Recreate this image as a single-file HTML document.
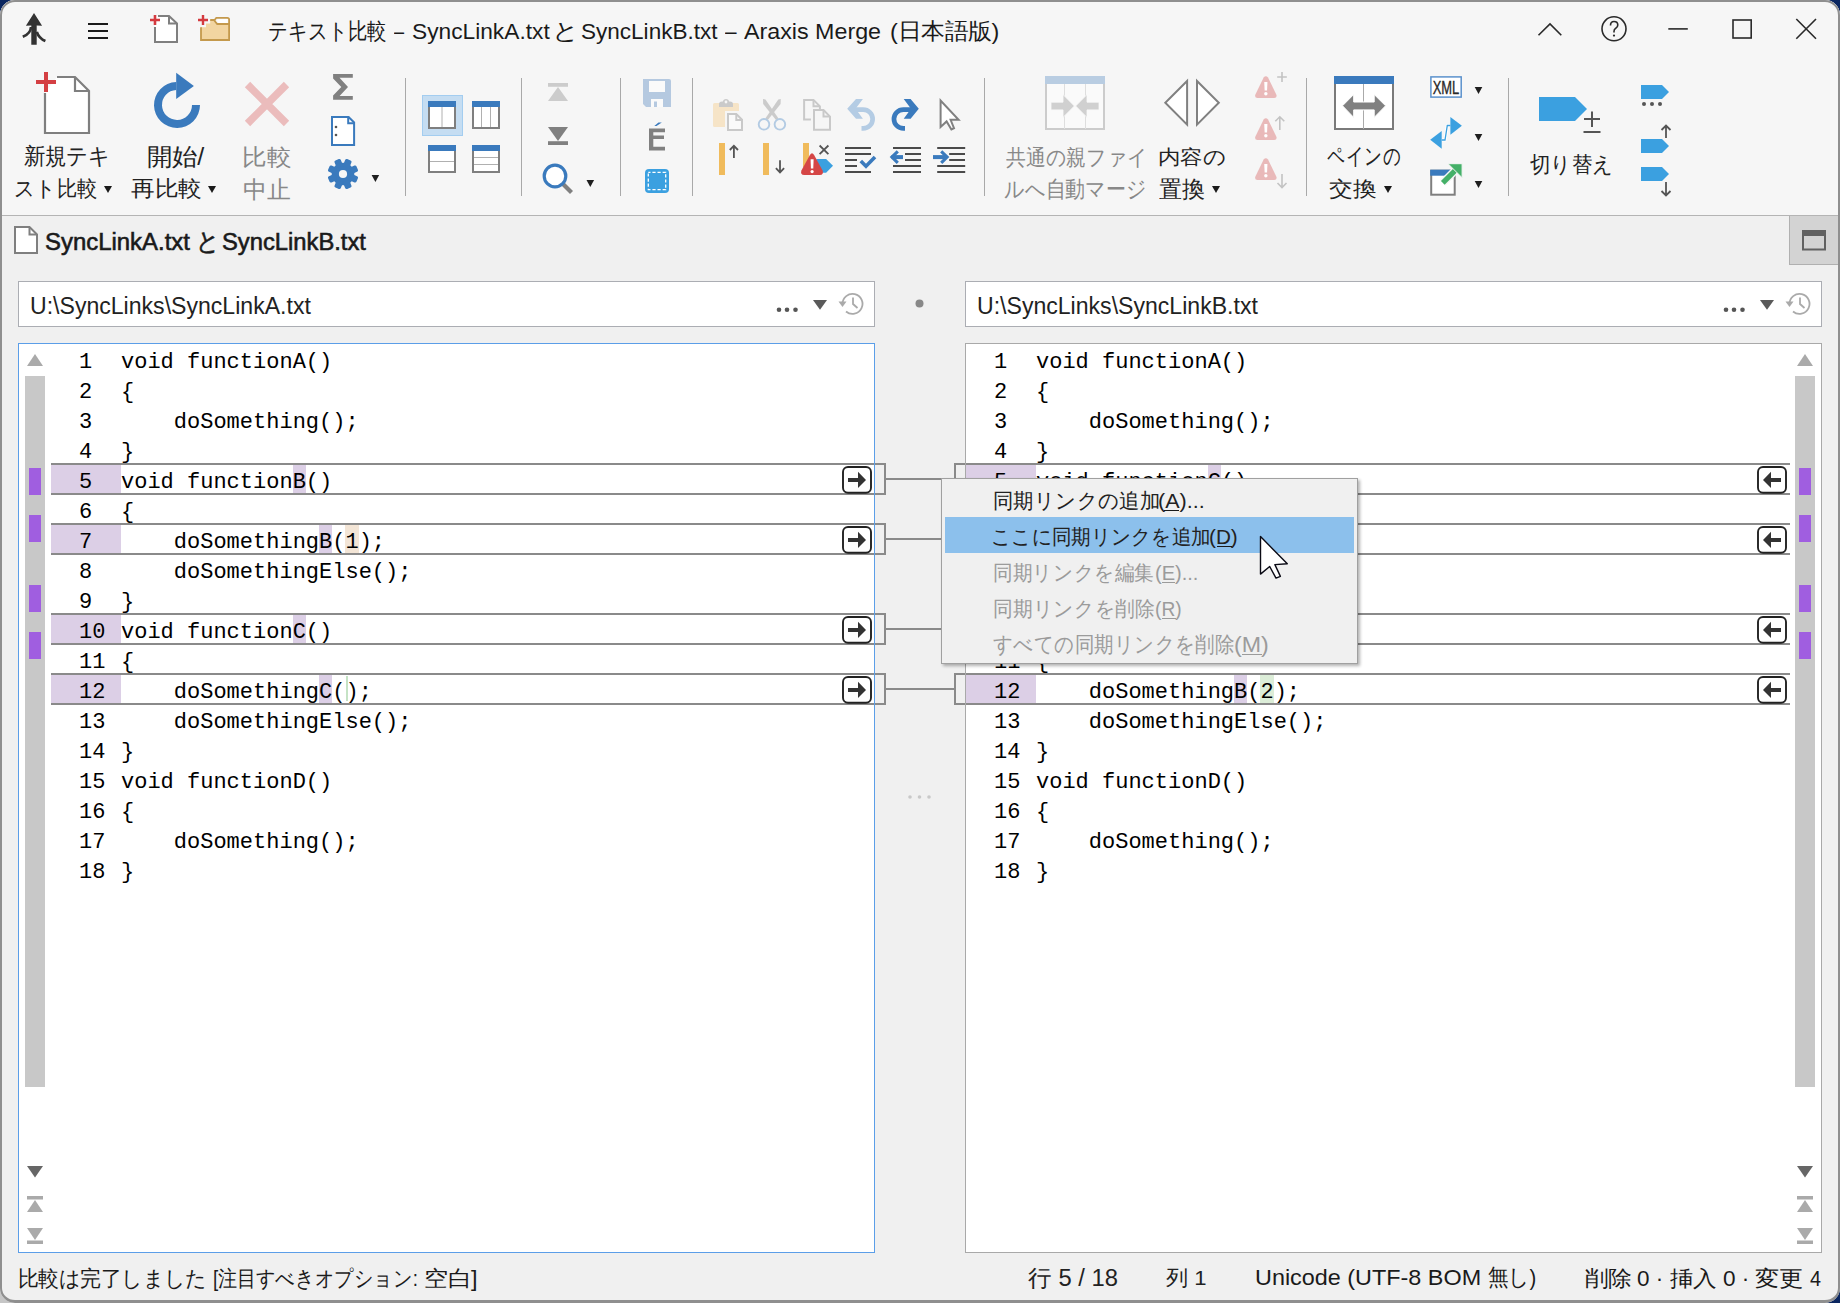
<!DOCTYPE html>
<html><head><meta charset="utf-8"><style>*{margin:0;padding:0;box-sizing:border-box}
html,body{width:1840px;height:1303px;overflow:hidden;background:#0a2660;font-family:"Liberation Sans",sans-serif}
.a{position:absolute}
svg.i{position:absolute;overflow:visible}
#win{position:absolute;left:0;top:0;width:1840px;height:1303px;border-radius:15px;background:#f0f0f0;overflow:hidden}
#frame{position:absolute;left:0;top:0;width:1840px;height:1303px;border:2px solid #8f8f8f;border-bottom-width:3px;border-radius:15px;pointer-events:none;z-index:50}
.t{position:absolute;white-space:nowrap;font-size:22px;line-height:26px;transform-origin:0 0}
.sep{position:absolute;width:1px;top:78px;height:118px;background:#a9a9a9}
.code{position:absolute;font-family:"Liberation Mono",monospace;font-size:22px;line-height:30px;white-space:pre;color:#000}
.pathbox{position:absolute;top:281px;width:857px;height:46px;background:#fff;border:1px solid #abadb3}
.pane{position:absolute;top:343px;width:857px;height:910px;background:#fff;border:1px solid #a9a9a9}
.lbox{position:absolute;height:32px;border:2px solid #8a8a8a}
.conn{position:absolute;height:2px;background:#8a8a8a;width:68px;left:886px}
.abtn{position:absolute;width:30px;height:28px;border:2px solid #333;border-radius:6px;background:#fff}
.mark{position:absolute;width:12px;height:27px;background:#a05ee0}
.tri{position:absolute;width:0;height:0;border-left:4px solid transparent;border-right:4px solid transparent;border-top:7px solid #1a1a1a}
</style></head>
<body>
<div class="a" id="corner-bl" style="left:0;top:1270px;width:40px;height:33px;background:#c6c6c6"></div>
<div id="win">
<div class="a" style="left:0;top:0;width:1840px;height:215px;background:#f6f6f6"></div>
<div class="a" style="left:0;top:215px;width:1840px;height:1px;background:#b4b4b4"></div>
<div class="t" style="left:268.43px;top:18.24px;color:#1a1a1a;transform:scale(0.8709,1.0304)">テキスト比較</div><div class="t" style="left:393.9px;top:18.24px;color:#1a1a1a;transform:scale(0.8231,1.0304)">–</div><div class="t" style="left:411.87px;top:18.24px;color:#1a1a1a;transform:scale(1.0333,1.0304)">SyncLinkA.txt</div><div class="t" style="left:551.73px;top:18.24px;color:#1a1a1a;transform:scale(1.1923,1.0304)">と</div><div class="t" style="left:581.28px;top:18.24px;color:#1a1a1a;transform:scale(1.0242,1.0304)">SyncLinkB.txt</div><div class="t" style="left:724.7px;top:18.24px;color:#1a1a1a;transform:scale(0.9462,1.0304)">–</div><div class="t" style="left:744.3px;top:18.24px;color:#1a1a1a;transform:scale(1.0574,1.0304)">Araxis Merge</div><div class="t" style="left:889.94px;top:18.24px;color:#1a1a1a;transform:scale(1.0644,1.0304)">(日本語版)</div>

<div class="sep" style="left:405px"></div>
<div class="sep" style="left:521px"></div>
<div class="sep" style="left:620px"></div>
<div class="sep" style="left:692px"></div>
<div class="sep" style="left:984px"></div>
<div class="sep" style="left:1306px"></div>
<div class="sep" style="left:1508px"></div>

<div class="t" style="left:24.05px;top:143.95px;color:#222222;transform:scale(0.9535,1.0238)">新規テキ</div><div class="t" style="left:13.75px;top:176.0px;color:#222222;transform:scale(0.9241,1.0)">スト比較</div><div class="t" style="left:146.86px;top:143.28px;color:#222222;transform:scale(1.1429,1.075)">開始/</div><div class="t" style="left:130.6px;top:176.0px;color:#222222;transform:scale(1.0769,1.0)">再比較</div><div class="t" style="left:241.76px;top:143.9px;color:#888888;transform:scale(1.122,1.0476)">比較</div><div class="t" style="left:242.9px;top:175.8px;color:#888888;transform:scale(1.0952,1.1)">中止</div>
<div class="t" style="left:1005.6px;top:144.71px;color:#888888;transform:scale(0.898,0.9952)">共通の親ファイ</div><div class="t" style="left:1004.1px;top:175.92px;color:#888888;transform:scale(0.9026,1.0381)">ルへ自動マージ</div><div class="t" style="left:1157.56px;top:146.09px;color:#222222;transform:scale(1.0222,0.9091)">内容の</div><div class="t" style="left:1159.0px;top:175.9px;color:#222222;transform:scale(1.0465,1.0476)">置換</div><div class="t" style="left:1326.89px;top:142.79px;color:#222222;transform:scale(0.8079,1.0526)">ペインの</div><div class="t" style="left:1329.42px;top:177.04px;color:#222222;transform:scale(1.0833,0.9565)">交換</div><div class="t" style="left:1530.0px;top:152.0px;color:#222222;transform:scale(0.931,1.0)">切り替え</div>
<div class="tri" style="left:103.5px;top:186px"></div>
<div class="tri" style="left:207.5px;top:186px"></div>
<div class="tri" style="left:1211.5px;top:186px"></div>
<div class="tri" style="left:1383.5px;top:186px"></div>

<div class="t" style="left:45.41px;top:228.02px;color:#1a1a1a;-webkit-text-stroke:0.55px #1a1a1a;transform:scale(1.0872,1.119)">SyncLinkA.txt</div><div class="t" style="left:196.3px;top:228.02px;color:#1a1a1a;-webkit-text-stroke:0.55px #1a1a1a;transform:scale(1.0333,1.119)">と</div><div class="t" style="left:222.02px;top:228.02px;color:#1a1a1a;-webkit-text-stroke:0.55px #1a1a1a;transform:scale(1.0797,1.119)">SyncLinkB.txt</div>
<div class="a" style="left:1789px;top:216px;width:49px;height:49px;background:#d3d3d3;border-left:1px solid #b0b0b0;border-bottom:1px solid #b0b0b0"></div>

<div class="pathbox" style="left:18px"></div>
<div class="t" style="left:29.9px;top:292.12px;color:#222222;transform:scale(1.0489,1.0952)">U:\SyncLinks\SyncLinkA.txt</div>
<div class="pathbox" style="left:965px"></div>
<div class="t" style="left:976.9px;top:292.12px;color:#222222;transform:scale(1.0489,1.0952)">U:\SyncLinks\SyncLinkB.txt</div>

<div class="pane" style="left:18px;border-color:#5b9ee8"></div>
<div class="pane" style="left:965px"></div>
<!-- overview bars -->
<div class="a" style="left:25px;top:376px;width:20px;height:711px;background:#c8c8c8"></div>
<div class="a" style="left:1795px;top:376px;width:20px;height:711px;background:#c8c8c8"></div>
<div class="mark" style="left:29px;top:468px"></div>
<div class="mark" style="left:29px;top:515px"></div>
<div class="mark" style="left:29px;top:585px"></div>
<div class="mark" style="left:29px;top:632px"></div>
<div class="mark" style="left:1799px;top:468px"></div>
<div class="mark" style="left:1799px;top:515px"></div>
<div class="mark" style="left:1799px;top:585px"></div>
<div class="mark" style="left:1799px;top:632px"></div>

<div class="a" style="left:51px;top:465px;width:70px;height:30px;background:#dccfe6"></div>
<div class="a" style="left:51px;top:525px;width:70px;height:30px;background:#dccfe6"></div>
<div class="a" style="left:51px;top:615px;width:70px;height:30px;background:#dccfe6"></div>
<div class="a" style="left:51px;top:675px;width:70px;height:30px;background:#dccfe6"></div>
<div class="a" style="left:292.6px;top:465px;width:13.2px;height:30px;background:#dccfe6"></div>
<div class="a" style="left:319.0px;top:525px;width:13.2px;height:30px;background:#dccfe6"></div>
<div class="a" style="left:345.4px;top:525px;width:13.2px;height:30px;background:#f3e5d6"></div>
<div class="a" style="left:292.6px;top:615px;width:13.2px;height:30px;background:#dccfe6"></div>
<div class="a" style="left:319.0px;top:675px;width:13.2px;height:30px;background:#dccfe6"></div>
<div class="code" style="left:79px;top:347.5px">1</div>
<div class="code" style="left:121px;top:347.5px">void functionA()</div>
<div class="code" style="left:79px;top:377.5px">2</div>
<div class="code" style="left:121px;top:377.5px">{</div>
<div class="code" style="left:79px;top:407.5px">3</div>
<div class="code" style="left:121px;top:407.5px">    doSomething();</div>
<div class="code" style="left:79px;top:437.5px">4</div>
<div class="code" style="left:121px;top:437.5px">}</div>
<div class="code" style="left:79px;top:467.5px">5</div>
<div class="code" style="left:121px;top:467.5px">void functionB()</div>
<div class="code" style="left:79px;top:497.5px">6</div>
<div class="code" style="left:121px;top:497.5px">{</div>
<div class="code" style="left:79px;top:527.5px">7</div>
<div class="code" style="left:121px;top:527.5px">    doSomethingB(1);</div>
<div class="code" style="left:79px;top:557.5px">8</div>
<div class="code" style="left:121px;top:557.5px">    doSomethingElse();</div>
<div class="code" style="left:79px;top:587.5px">9</div>
<div class="code" style="left:121px;top:587.5px">}</div>
<div class="code" style="left:79px;top:617.5px">10</div>
<div class="code" style="left:121px;top:617.5px">void functionC()</div>
<div class="code" style="left:79px;top:647.5px">11</div>
<div class="code" style="left:121px;top:647.5px">{</div>
<div class="code" style="left:79px;top:677.5px">12</div>
<div class="code" style="left:121px;top:677.5px">    doSomethingC();</div>
<div class="code" style="left:79px;top:707.5px">13</div>
<div class="code" style="left:121px;top:707.5px">    doSomethingElse();</div>
<div class="code" style="left:79px;top:737.5px">14</div>
<div class="code" style="left:121px;top:737.5px">}</div>
<div class="code" style="left:79px;top:767.5px">15</div>
<div class="code" style="left:121px;top:767.5px">void functionD()</div>
<div class="code" style="left:79px;top:797.5px">16</div>
<div class="code" style="left:121px;top:797.5px">{</div>
<div class="code" style="left:79px;top:827.5px">17</div>
<div class="code" style="left:121px;top:827.5px">    doSomething();</div>
<div class="code" style="left:79px;top:857.5px">18</div>
<div class="code" style="left:121px;top:857.5px">}</div>
<div class="a" style="left:966px;top:465px;width:70px;height:30px;background:#dccfe6"></div>
<div class="a" style="left:966px;top:525px;width:70px;height:30px;background:#dccfe6"></div>
<div class="a" style="left:966px;top:615px;width:70px;height:30px;background:#dccfe6"></div>
<div class="a" style="left:966px;top:675px;width:70px;height:30px;background:#dccfe6"></div>
<div class="a" style="left:1207.6px;top:465px;width:13.2px;height:30px;background:#dccfe6"></div>
<div class="a" style="left:1234.0px;top:525px;width:13.2px;height:30px;background:#dccfe6"></div>
<div class="a" style="left:1207.6px;top:615px;width:13.2px;height:30px;background:#dccfe6"></div>
<div class="a" style="left:1234.0px;top:675px;width:13.2px;height:30px;background:#dccfe6"></div>
<div class="a" style="left:1260.4px;top:675px;width:13.2px;height:30px;background:#dcedd8"></div>
<div class="code" style="left:994px;top:347.5px">1</div>
<div class="code" style="left:1036px;top:347.5px">void functionA()</div>
<div class="code" style="left:994px;top:377.5px">2</div>
<div class="code" style="left:1036px;top:377.5px">{</div>
<div class="code" style="left:994px;top:407.5px">3</div>
<div class="code" style="left:1036px;top:407.5px">    doSomething();</div>
<div class="code" style="left:994px;top:437.5px">4</div>
<div class="code" style="left:1036px;top:437.5px">}</div>
<div class="code" style="left:994px;top:467.5px">5</div>
<div class="code" style="left:1036px;top:467.5px">void functionC()</div>
<div class="code" style="left:994px;top:497.5px">6</div>
<div class="code" style="left:1036px;top:497.5px">{</div>
<div class="code" style="left:994px;top:527.5px">7</div>
<div class="code" style="left:1036px;top:527.5px">    doSomethingC();</div>
<div class="code" style="left:994px;top:557.5px">8</div>
<div class="code" style="left:1036px;top:557.5px">    doSomethingElse();</div>
<div class="code" style="left:994px;top:587.5px">9</div>
<div class="code" style="left:1036px;top:587.5px">}</div>
<div class="code" style="left:994px;top:617.5px">10</div>
<div class="code" style="left:1036px;top:617.5px">void functionB()</div>
<div class="code" style="left:994px;top:647.5px">11</div>
<div class="code" style="left:1036px;top:647.5px">{</div>
<div class="code" style="left:994px;top:677.5px">12</div>
<div class="code" style="left:1036px;top:677.5px">    doSomethingB(2);</div>
<div class="code" style="left:994px;top:707.5px">13</div>
<div class="code" style="left:1036px;top:707.5px">    doSomethingElse();</div>
<div class="code" style="left:994px;top:737.5px">14</div>
<div class="code" style="left:1036px;top:737.5px">}</div>
<div class="code" style="left:994px;top:767.5px">15</div>
<div class="code" style="left:1036px;top:767.5px">void functionD()</div>
<div class="code" style="left:994px;top:797.5px">16</div>
<div class="code" style="left:1036px;top:797.5px">{</div>
<div class="code" style="left:994px;top:827.5px">17</div>
<div class="code" style="left:1036px;top:827.5px">    doSomething();</div>
<div class="code" style="left:994px;top:857.5px">18</div>
<div class="code" style="left:1036px;top:857.5px">}</div>

<!-- link boxes -->
<div class="lbox" style="border-left:0;left:51px;top:463px;width:835px"></div>
<div class="lbox" style="border-left:0;left:51px;top:523px;width:835px"></div>
<div class="lbox" style="border-left:0;left:51px;top:613px;width:835px"></div>
<div class="lbox" style="border-left:0;left:51px;top:673px;width:835px"></div>
<div class="lbox" style="border-right:0;left:954px;top:463px;width:836px"></div>
<div class="lbox" style="border-right:0;left:954px;top:523px;width:836px"></div>
<div class="lbox" style="border-right:0;left:954px;top:613px;width:836px"></div>
<div class="lbox" style="border-right:0;left:954px;top:673px;width:836px"></div>
<div class="conn" style="top:478px"></div>
<div class="conn" style="top:538px"></div>
<div class="conn" style="top:628px"></div>
<div class="conn" style="top:688px"></div>
<!-- re-draw pane borders over link boxes -->
<div class="a" style="left:874px;top:343px;width:1px;height:910px;background:#5b9ee8"></div>
<div class="a" style="left:965px;top:343px;width:1px;height:910px;background:#a9a9a9"></div>

<!-- araxis logo -->
<svg class="i" style="left:0;top:0" width="60" height="60" viewBox="0 0 60 60">
 <path d="M34 13 L25.9 25.8 L31.3 25.4 V44.7 H36.7 V25.4 L42.1 25.8 Z" fill="#333"/>
 <path d="M31 27 Q30.8 33.5 22.8 36.8" fill="none" stroke="#333" stroke-width="2.7"/>
 <path d="M36.8 31.8 Q38.8 38.2 45.4 41" fill="none" stroke="#333" stroke-width="2.7"/>
</svg>
<!-- hamburger -->
<div class="a" style="left:88px;top:23px;width:20px;height:2px;background:#1a1a1a"></div>
<div class="a" style="left:88px;top:30px;width:20px;height:2px;background:#1a1a1a"></div>
<div class="a" style="left:88px;top:37px;width:20px;height:2px;background:#1a1a1a"></div>
<!-- new doc small -->
<svg class="i" style="left:0;top:0" width="240" height="50" viewBox="0 0 240 50">
 <path d="M155 27 V42 H177 V23.5 L169 16 H158" fill="#fff" stroke="#7f7f7f" stroke-width="2"/>
 <path d="M155 16 H158 V27 H155 Z" fill="#fff"/>
 <path d="M169 16 V23.5 H177" fill="none" stroke="#7f7f7f" stroke-width="2"/>
 <path d="M150 20 H160 M155 15 V25" stroke="#d43a3f" stroke-width="2.6"/>
 <!-- folder -->
 <path d="M201 27.2 H206 V23.6 H210.2 V20 H214 L217.1 24 H229.1 V40 H201 Z" fill="#f2d5a1"/>
 <path d="M201 27.2 V40 H229.1 V19.6 Q229.1 17.8 227.3 17.8 H216.3 L214.6 20 H210.2" fill="none" stroke="#c4994c" stroke-width="1.8"/>
 <path d="M213.9 20 L217.2 24 H229" fill="none" stroke="#c4994c" stroke-width="1.8"/>
 <path d="M217.9 19.3 H227.7 V23 H218.6 L216.9 20.6 Z" fill="#fff"/>
 <path d="M198 20 H208 M203 15 V25" stroke="#d43a3f" stroke-width="2.4"/>
</svg>
<!-- window controls -->
<svg class="i" style="left:1520px;top:0" width="320" height="58" viewBox="1520 0 320 58">
 <path d="M1538.5 35.3 L1550 23.9 L1561.3 35.3" fill="none" stroke="#2a2a2a" stroke-width="1.6"/>
 <circle cx="1614" cy="28.8" r="12" fill="none" stroke="#2a2a2a" stroke-width="1.6"/>
 <path d="M1610.5 25.5 Q1610.5 21.5 1614 21.5 Q1617.8 21.5 1617.8 25 Q1617.8 27.3 1615.5 28.5 Q1614 29.3 1614 31.5 V32.5" fill="none" stroke="#2a2a2a" stroke-width="1.6"/>
 <circle cx="1614" cy="35.6" r="1.1" fill="#2a2a2a"/>
 <path d="M1668.3 28.9 H1687.8" stroke="#2a2a2a" stroke-width="1.6"/>
 <rect x="1733" y="20" width="18.2" height="18" fill="none" stroke="#2a2a2a" stroke-width="1.6"/>
 <path d="M1796.3 19 L1816 38.8 M1816 19 L1796.3 38.8" stroke="#2a2a2a" stroke-width="1.6"/>
</svg>
<!-- tab doc icon -->
<svg class="i" style="left:0;top:200px" width="60" height="70" viewBox="0 200 60 70">
 <path d="M15 227 H29.5 L37 234.5 V253 H15 Z" fill="#fff" stroke="#7f7f7f" stroke-width="2"/>
 <path d="M29.5 227 V234.5 H37" fill="none" stroke="#7f7f7f" stroke-width="2"/>
</svg>
<!-- tab right window icon -->
<svg class="i" style="left:1790px;top:216px" width="50" height="50" viewBox="1790 216 50 50">
 <rect x="1803" y="231" width="22" height="18.5" fill="none" stroke="#616161" stroke-width="2"/>
 <rect x="1802" y="230" width="24" height="6" fill="#616161"/>
</svg>
<!-- path box icons -->
<svg class="i" style="left:0;top:280px" width="1840" height="50" viewBox="0 280 1840 50">
 <g id="pb" fill="#555">
  <circle cx="779" cy="309.7" r="2.3"/><circle cx="787" cy="309.7" r="2.3"/><circle cx="795.5" cy="309.7" r="2.3"/>
  <path d="M813 300 H827 L820 309.8 Z" fill="#5a5a5a"/>
 </g>
 <g fill="#555">
  <circle cx="1726" cy="309.7" r="2.3"/><circle cx="1734" cy="309.7" r="2.3"/><circle cx="1742.5" cy="309.7" r="2.3"/>
  <path d="M1760 300 H1774 L1767 309.8 Z" fill="#5a5a5a"/>
 </g>
 <g fill="none" stroke="#aaaaaa" stroke-width="1.8">
  <path d="M842.5 304 A10 10 0 1 1 846 311.5"/>
  <path d="M853 297.5 V304 L857.5 308"/>
  <path d="M1789.5 304 A10 10 0 1 1 1793 311.5"/>
  <path d="M1800 297.5 V304 L1804.5 308"/>
 </g>
 <path d="M838.5 301.5 H846.5 L842.5 307 Z" fill="#aaaaaa"/>
 <path d="M1785.5 301.5 H1793.5 L1789.5 307 Z" fill="#aaaaaa"/>
 <circle cx="919.5" cy="303.5" r="4" fill="#888"/>
</svg>
<!-- pane scroll icons -->
<svg class="i" style="left:0;top:340px" width="1840" height="920" viewBox="0 340 1840 920">
 <path d="M27 366 L35 354 L43 366 Z" fill="#aaaaaa"/>
 <path d="M1797 366 L1805 354 L1813 366 Z" fill="#aaaaaa"/>
 <path d="M27 1166 H43 L35 1177.5 Z" fill="#666"/>
 <path d="M1797 1166 H1813 L1805 1177.5 Z" fill="#666"/>
 <g fill="#aaaaaa">
  <rect x="27" y="1196" width="16" height="3.5"/><path d="M27 1212 L35 1200 L43 1212 Z"/>
  <path d="M27 1228 H43 L35 1240 Z"/><rect x="27" y="1240.5" width="16" height="3.5"/>
  <rect x="1797" y="1196" width="16" height="3.5"/><path d="M1797 1212 L1805 1200 L1813 1212 Z"/>
  <path d="M1797 1228 H1813 L1805 1240 Z"/><rect x="1797" y="1240.5" width="16" height="3.5"/>
 </g>
 <g fill="#c8c8c8"><circle cx="910" cy="797" r="1.8"/><circle cx="919.5" cy="797" r="1.8"/><circle cx="929" cy="797" r="1.8"/></g>
</svg>
<!-- arrow buttons -->
<svg class="i" style="left:0;top:450px" width="1840" height="260" viewBox="0 450 1840 260">
 <defs>
  <g id="rb"><rect x="843" y="467" width="28" height="25.8" rx="5" fill="#fff" stroke="#222" stroke-width="1.9"/>
   <path d="M848 478 H858 V471.8 L866 480 L858 488 V482 H848 Z" fill="#333"/></g>
  <g id="lb"><rect x="1758" y="467" width="28" height="25.8" rx="5" fill="#fff" stroke="#222" stroke-width="1.9"/>
   <path d="M1781 478 H1771 V471.8 L1763 480 L1771 488 V482 H1781 Z" fill="#333"/></g>
 </defs>
 <use href="#rb"/><use href="#rb" y="60"/><use href="#rb" y="150"/><use href="#rb" y="210"/>
 <use href="#lb"/><use href="#lb" y="60"/><use href="#lb" y="150"/><use href="#lb" y="210"/>
</svg>
<!-- green insertion cursor left line 12 -->
<div class="a" style="left:345.5px;top:676px;width:2px;height:25px;background:#c5e3c5"></div>
<svg class="i" style="left:0;top:58px" width="1840" height="157" viewBox="0 58 1840 157">
<path d="M45 93 V133 H89 V91 L75 77 H57" fill="#fff" stroke="#7f7f7f" stroke-width="2.2"/>
<path d="M75 77 V91 H89" fill="none" stroke="#7f7f7f" stroke-width="2.2"/>
<path d="M36 82 H56 M46 72 V92" stroke="#d43f43" stroke-width="4"/>
<path d="M200 105 A23 23 0 1 1 176.2 82 V90 A15 15 0 1 0 192 105 Z" fill="#3a7abd"/>
<path d="M176.2 72.8 L193.9 86 L176.2 98.9 Z" fill="#3a7abd"/>
<path d="M247.5 84.5 L286.5 123.5 M286.5 84.5 L247.5 123.5" stroke="#ebbcbc" stroke-width="7.6"/>
<path d="M333.1 74.1 H352.8 V77.8 H339.5 L348 87 L339.6 96 H352.8 V99.8 H333.1 V95.4 L341.3 87 L333.1 78.5 Z" fill="#808080"/>
<path d="M332 117 H348.6 L354.1 122.5 V145 H332 Z" fill="#fff" stroke="#3a7abd" stroke-width="2"/>
<path d="M348.2 117 V123.2 H354.1" fill="none" stroke="#3a7abd" stroke-width="2"/>
<circle cx="336" cy="127" r="1.3" fill="#555"/><circle cx="336" cy="135" r="1.3" fill="#555"/>
<g fill="#3a7abd"><circle cx="343" cy="174" r="11.3"/><rect x="339.6" y="158.6" width="6.8" height="8" rx="1.6" transform="rotate(22.5 343 174)"/><rect x="339.6" y="158.6" width="6.8" height="8" rx="1.6" transform="rotate(67.5 343 174)"/><rect x="339.6" y="158.6" width="6.8" height="8" rx="1.6" transform="rotate(112.5 343 174)"/><rect x="339.6" y="158.6" width="6.8" height="8" rx="1.6" transform="rotate(157.5 343 174)"/><rect x="339.6" y="158.6" width="6.8" height="8" rx="1.6" transform="rotate(202.5 343 174)"/><rect x="339.6" y="158.6" width="6.8" height="8" rx="1.6" transform="rotate(247.5 343 174)"/><rect x="339.6" y="158.6" width="6.8" height="8" rx="1.6" transform="rotate(292.5 343 174)"/><rect x="339.6" y="158.6" width="6.8" height="8" rx="1.6" transform="rotate(337.5 343 174)"/></g><circle cx="343" cy="174" r="4.1" fill="#f6f6f6"/>
<path d="M371.6 175 H379.20000000000005 L375.40000000000003 182 Z" fill="#1f1f1f"/>
<rect x="422.5" y="95.5" width="40" height="40" fill="#c5ddf2" stroke="#a3cdf0" stroke-width="1"/>
<rect x="429" y="102" width="26" height="26" fill="#fff" stroke="#7f7f7f" stroke-width="2"/><rect x="428" y="101" width="28" height="6" fill="#3a7abd"/><path d="M442 107 V127" stroke="#b0b0b0" stroke-width="1"/>
<rect x="473" y="102" width="26" height="26" fill="#fff" stroke="#7f7f7f" stroke-width="2"/><rect x="472" y="101" width="28" height="6" fill="#3a7abd"/><path d="M481.5 107 V127 M490.5 107 V127" stroke="#b0b0b0" stroke-width="1"/>
<rect x="429" y="146" width="26" height="26" fill="#fff" stroke="#7f7f7f" stroke-width="2"/><rect x="428" y="145" width="28" height="6" fill="#3a7abd"/><path d="M430 161.5 H454" stroke="#b0b0b0" stroke-width="1"/>
<rect x="473" y="146" width="26" height="26" fill="#fff" stroke="#7f7f7f" stroke-width="2"/><rect x="472" y="145" width="28" height="6" fill="#3a7abd"/><path d="M474 157.5 H498 M474 164.5 H498" stroke="#b0b0b0" stroke-width="1"/>
<rect x="548" y="83" width="20" height="3.8" fill="#cccccc"/><path d="M548 101 L558 87 L568 101 Z" fill="#cccccc"/>
<path d="M548 127 H568 L558 141 Z" fill="#808080"/><rect x="548" y="141.2" width="20" height="3.8" fill="#808080"/>
<path d="M562.5 183.5 L571.5 192.5" stroke="#808080" stroke-width="4.2"/>
<circle cx="555" cy="176" r="10.8" fill="#fff" stroke="#3a7abd" stroke-width="3.2"/>
<path d="M586.5 180 H594.1 L590.3 187 Z" fill="#1f1f1f"/>
<path d="M643 79 H669 Q671 79 671 81 V107 H646 L643 104 Z" fill="#b5c9e0"/>
<rect x="649" y="81" width="16" height="11" fill="#fafafa"/>
<rect x="651" y="99" width="12" height="8" fill="#fafafa"/><rect x="654" y="101.5" width="3" height="5.5" fill="#b5c9e0"/>
<path d="M649 128.5 H665 V132.3 H653.3 V135.4 H664 V139 H653.3 V146.8 H665 V150.6 H649 Z" fill="#808080"/>
<path d="M654.3 126 L658.5 122.6 H661.8 L656.5 126 Z" fill="#3a7abd"/>
<rect x="645" y="169" width="24" height="24" rx="4" fill="#3ba0e0"/>
<rect x="648.3" y="172.3" width="17.4" height="17.4" fill="none" stroke="#fff" stroke-width="1.3" stroke-dasharray="3.2 1.9" stroke-dashoffset="1"/>
<path d="M714.5 103 H737.5 Q739 103 739 104.5 V111 H725 V127 H714.5 Q713 127 713 125.5 V104.5 Q713 103 714.5 103 Z" fill="#f6e4c7"/>
<path d="M719 104 Q719 101.5 722 101.5 H723 Q723.2 99 726 99 Q728.8 99 729 101.5 H730 Q733 101.5 733 104 V107 H719 Z" fill="#cacaca"/><circle cx="726" cy="102" r="1.4" fill="#f6f6f6"/>
<path d="M728 114 H736.3 L742 119.7 V130 H728 Z" fill="#fafafa" stroke="#c9c9c9" stroke-width="2"/><path d="M736.3 114 V120 H742" fill="none" stroke="#c9c9c9" stroke-width="2"/>
<path d="M763 99 L765.5 99.5 L778.5 118.5 L776 120 L763.2 104 Z" fill="#cbcbcb"/>
<path d="M780.8 99 L778.3 99.5 L765.3 118.5 L767.8 120 L780.6 104 Z" fill="#cbcbcb"/>
<circle cx="764" cy="124.3" r="5.3" fill="#f6f6f6" stroke="#b3cbe3" stroke-width="1.9"/><circle cx="779.9" cy="124.3" r="5.3" fill="#f6f6f6" stroke="#b3cbe3" stroke-width="1.9"/>
<path d="M810.9 119.6 H804.1 V99.9 H813.5 L819.9 106.3 V110" fill="none" stroke="#c9c9c9" stroke-width="2"/><path d="M813.5 99.9 V106.3 H819.9" fill="none" stroke="#c9c9c9" stroke-width="2"/>
<path d="M814 110.1 H823.5 L830 116.6 V129.8 H814 Z" fill="#f6f6f6" stroke="#c9c9c9" stroke-width="2"/><path d="M823.5 110.1 V116.6 H830" fill="none" stroke="#c9c9c9" stroke-width="2"/>
<path d="M856 98.9 H862.9 L855.6 108.8 L862.9 118.8 H856 L847.2 108.8 Z" fill="#b4cce4"/>
<path d="M852 109.55 H863.2 A9.45 9.45 0 0 1 863.2 128.45 H861.5" fill="none" stroke="#b4cce4" stroke-width="4.7"/>
<path d="M910.6 98.9 H903.7 L911 108.8 L903.7 118.8 H910.6 L918.8 108.8 Z" fill="#3a7abd"/>
<path d="M914.6 109.55 H903.4 A9.45 9.45 0 0 0 903.4 128.45 H905" fill="none" stroke="#3a7abd" stroke-width="4.7"/>
<path d="M940.6 100.5 V127 L946.6 121.4 L951.4 129.4 L954 128.2 L950.6 119.8 H958.6 Z" fill="#fff" stroke="#808080" stroke-width="2" stroke-linejoin="miter"/>
<rect x="719" y="143" width="6" height="32" fill="#f0bb5c"/>
<path d="M733.9 158 V146.5 M729.8 150 L733.9 145.8 L738 150" fill="none" stroke="#555" stroke-width="1.8"/>
<rect x="763" y="143" width="6" height="32" fill="#f0bb5c"/>
<path d="M780 160.3 V172 M775.9 168.2 L780 172.4 L784.1 168.2" fill="none" stroke="#555" stroke-width="1.8"/>
<rect x="803" y="143" width="6" height="24" fill="#f0bb5c"/>
<path d="M816.3 158.9 H826.1 L833 165.8 L826.1 172.8 H816.3 Z" fill="#3ba0e0"/>
<path d="M819.6 145.5 L828.4 154.2 M828.4 145.5 L819.6 154.2" stroke="#555" stroke-width="1.8"/>
<path d="M809.9 155 Q812 151.4 814.1 155 L822.6 170.6 Q824 175 819.8 175 H804.2 Q800 175 801.4 170.6 Z" fill="#d54646" stroke="#f6f6f6" stroke-width="0"/>
<path d="M810.6 159.2 H813.6 L813.3 168.6 H810.9 Z" fill="#fff"/><circle cx="812.1" cy="171.6" r="1.6" fill="#fff"/>
<rect x="845" y="147" width="26" height="2" fill="#4a4a4a"/><rect x="845" y="153" width="26" height="2" fill="#4a4a4a"/><rect x="845" y="159" width="12" height="2" fill="#4a4a4a"/><rect x="845" y="165" width="12" height="2" fill="#4a4a4a"/><rect x="845" y="171" width="26" height="2" fill="#4a4a4a"/>
<path d="M860.8 161 L866 166.2 L875 157" fill="none" stroke="#3a7abd" stroke-width="3.6"/>
<rect x="893" y="147" width="28" height="2" fill="#4a4a4a"/><rect x="905" y="153" width="16" height="2" fill="#4a4a4a"/><rect x="905" y="159" width="16" height="2" fill="#4a4a4a"/><rect x="893" y="165" width="28" height="2" fill="#4a4a4a"/><rect x="893" y="171" width="28" height="2" fill="#4a4a4a"/>
<path d="M897.8 151.3 L891.9 157.1 L897.8 162.9" fill="none" stroke="#3a7abd" stroke-width="3.1"/><rect x="891.5" y="155.1" width="11.5" height="4" fill="#3a7abd"/>
<rect x="937.2" y="147" width="28" height="2" fill="#4a4a4a"/><rect x="949.2" y="153" width="15.799999999999955" height="2" fill="#4a4a4a"/><rect x="949.2" y="159" width="15.799999999999955" height="2" fill="#4a4a4a"/><rect x="937.2" y="165" width="28" height="2" fill="#4a4a4a"/><rect x="937.2" y="171" width="28" height="2" fill="#4a4a4a"/>
<path d="M941.2 151.3 L947.1 157.1 L941.2 162.9" fill="none" stroke="#3a7abd" stroke-width="3.1"/><rect x="933" y="155.1" width="12.5" height="4" fill="#3a7abd"/>
<rect x="1046" y="77" width="58" height="52" fill="#fafafa" stroke="#cccccc" stroke-width="2"/>
<rect x="1045" y="76" width="60" height="8" fill="#b9cde2"/>
<path d="M1064.5 84 V129 M1085.5 84 V129" stroke="#dedede" stroke-width="1"/>
<path d="M1051 102.2 H1063 V94.5 L1074.4 106 L1063 117.4 V109.9 H1051 Z" fill="#d0d0d0" stroke="#fafafa" stroke-width="0.8"/>
<path d="M1099 102.2 H1087 V94.5 L1075.6 106 L1087 117.4 V109.9 H1099 Z" fill="#d0d0d0" stroke="#fafafa" stroke-width="0.8"/>
<path d="M1187.1 81 V124.6 L1165.3 102.8 Z" fill="#fff" stroke="#808080" stroke-width="2" stroke-linejoin="miter"/>
<path d="M1197 81 V124.6 L1218.8 102.8 Z" fill="#fff" stroke="#808080" stroke-width="2" stroke-linejoin="miter"/>
<path d="M1263.65 77.5 Q1265.8500000000001 75.2 1268.0500000000002 77.5 L1276.4 94.8 Q1277.3 98 1274.2 98 H1257.5 Q1254.4 98 1255.3 94.8 Z" fill="#e9b9b9"/><path d="M1264.2500000000002 82 H1267.45 L1267.0500000000002 90.5 H1264.65 Z" fill="#fff"/><circle cx="1265.8500000000001" cy="93.8" r="1.7" fill="#fff"/>
<path d="M1263.65 119.5 Q1265.8500000000001 117.2 1268.0500000000002 119.5 L1276.4 136.8 Q1277.3 140 1274.2 140 H1257.5 Q1254.4 140 1255.3 136.8 Z" fill="#e9b9b9"/><path d="M1264.2500000000002 124 H1267.45 L1267.0500000000002 132.5 H1264.65 Z" fill="#fff"/><circle cx="1265.8500000000001" cy="135.8" r="1.7" fill="#fff"/>
<path d="M1263.65 159.5 Q1265.8500000000001 157.2 1268.0500000000002 159.5 L1276.4 176.8 Q1277.3 180 1274.2 180 H1257.5 Q1254.4 180 1255.3 176.8 Z" fill="#e9b9b9"/><path d="M1264.2500000000002 164 H1267.45 L1267.0500000000002 172.5 H1264.65 Z" fill="#fff"/><circle cx="1265.8500000000001" cy="175.8" r="1.7" fill="#fff"/>
<path d="M1277.2 77 H1286.8 M1282 72.1 V82" stroke="#c3c3c3" stroke-width="1.6"/>
<path d="M1279.8 130 V117 M1275.3 121.3 L1279.8 116.8 L1284.3 121.3" fill="none" stroke="#c3c3c3" stroke-width="1.6"/>
<path d="M1282 174 V187.5 M1277.5 183 L1282 187.5 L1286.5 183" fill="none" stroke="#c3c3c3" stroke-width="1.6"/>
<rect x="1335" y="77" width="58" height="52" fill="#fff" stroke="#7a7a7a" stroke-width="2"/>
<rect x="1334" y="76" width="60" height="8" fill="#3a7abd"/>
<path d="M1363.5 84 V129" stroke="#aaaaaa" stroke-width="1"/>
<path d="M1342.5 105.8 L1353.7 94.5 V102 H1374.2 V94.5 L1385.6 105.8 L1374.2 117.4 V109.9 H1353.7 V117.4 Z" fill="#808080" stroke="#fff" stroke-width="1"/>
<rect x="1430.9" y="76.9" width="30.3" height="20.2" fill="#fff" stroke="#5b91cc" stroke-width="1.5"/>
<text x="1446" y="94.3" text-anchor="middle" font-family="Liberation Sans" font-size="18" fill="#2a2a2a" stroke="#2a2a2a" stroke-width="0.35" transform="translate(1446 0) scale(0.72 1) translate(-1446 0)">XML</text>
<path d="M1474.7 87 H1482.3 L1478.5 94 Z" fill="#1f1f1f"/>
<path d="M1441.7 140 H1445 L1447.3 125.5 H1450.4" fill="none" stroke="#fff" stroke-width="3"/>
<path d="M1441.7 140 H1445 L1447.3 125.5 H1450.4" fill="none" stroke="#3ba0e0" stroke-width="1.3"/>
<path d="M1430.2 139.8 L1441.7 131 V148.8 Z" fill="#3ba0e0"/><path d="M1461.9 125.8 L1450.4 116.9 V134.8 Z" fill="#3ba0e0"/>
<path d="M1474.7 134 H1482.3 L1478.5 141 Z" fill="#1f1f1f"/>
<rect x="1431.2" y="170.7" width="23.5" height="24" fill="#fff" stroke="#7f7f7f" stroke-width="2"/>
<rect x="1430.2" y="169.7" width="25.5" height="6" fill="#3a7abd"/>
<path d="M1442.8 182.8 L1456 169.6" stroke="#f6f6f6" stroke-width="8"/>
<path d="M1442.8 182.8 L1456 169.6" stroke="#44b068" stroke-width="5.2"/>
<path d="M1448 163.7 H1462.1 V177.7 Z" fill="#44b068" stroke="#f6f6f6" stroke-width="1"/>
<path d="M1474.7 181 H1482.3 L1478.5 188 Z" fill="#1f1f1f"/>
<path d="M1539 97 H1575 L1587 109 L1575 121 H1539 Z" fill="#3ba0e0"/>
<path d="M1592 111.5 V127 M1584 119 H1600 M1583.5 132 H1600.5" stroke="#555" stroke-width="2"/>
<path d="M1641 85 H1662 L1669 92 L1662 99 H1641 Z" fill="#3ba0e0"/>
<circle cx="1644" cy="104" r="2" fill="#555"/><circle cx="1652" cy="104" r="2" fill="#555"/><circle cx="1660" cy="104" r="2" fill="#555"/>
<path d="M1641 139 H1662 L1669 146 L1662 153 H1641 Z" fill="#3ba0e0"/>
<path d="M1666 138 V125.5 M1661.5 130 L1666 125.5 L1670.5 130" fill="none" stroke="#555" stroke-width="1.8"/>
<path d="M1641 167 H1662 L1669 174 L1662 181 H1641 Z" fill="#3ba0e0"/>
<path d="M1666 182 V195.5 M1661.5 191 L1666 195.5 L1670.5 191" fill="none" stroke="#555" stroke-width="1.8"/>
</svg>

<div class="t" style="left:17.94px;top:1266.02px;color:#1a1a1a;transform:scale(0.9298,0.9792)">比較は完了しました</div><div class="t" style="left:212.75px;top:1266.02px;color:#1a1a1a;transform:scale(0.8532,0.9792)">[注目すべきオプション:</div><div class="t" style="left:423.73px;top:1266.02px;color:#1a1a1a;transform:scale(1.0708,0.9792)">空白]</div><div class="t" style="left:1027.5px;top:1264.82px;color:#222222;transform:scale(1.0819,1.06)">行 5 / 18</div><div class="t" style="left:1166.4px;top:1266.1px;color:#222222;transform:scale(1.0051,0.9524)">列 1</div><div class="t" style="left:1254.87px;top:1263.95px;color:#1a1a1a;transform:scale(1.0632,1.0261)">Unicode (UTF-8 BOM</div><div class="t" style="left:1487.68px;top:1263.95px;color:#1a1a1a;transform:scale(0.92,1.0261)">無し)</div><div class="t" style="left:1584.5px;top:1266.01px;color:#1a1a1a;transform:scale(1.0674,0.9864)">削除</div><div class="t" style="left:1637.28px;top:1266.01px;color:#1a1a1a;transform:scale(1.0227,0.9864)">0 ·</div><div class="t" style="left:1670.0px;top:1266.01px;color:#1a1a1a;transform:scale(1.0581,0.9864)">挿入</div><div class="t" style="left:1723.37px;top:1266.01px;color:#1a1a1a;transform:scale(1.0273,0.9864)">0 ·</div><div class="t" style="left:1754.91px;top:1266.01px;color:#1a1a1a;transform:scale(1.0857,0.9864)">変更</div><div class="t" style="left:1810.4px;top:1266.01px;color:#1a1a1a;transform:scale(0.9,0.9864)">4</div>

<!-- menu -->
<div class="a" style="left:941px;top:478px;width:417px;height:186px;background:#f0f0f0;border:1px solid #a0a0a0;box-shadow:2px 2px 3px rgba(0,0,0,.3)"></div>
<div class="a" style="left:945px;top:517px;width:409px;height:36px;background:#8cc0ec"></div>
<div class="t" style="left:992.64px;top:488.69px;color:#222222;transform:scale(0.9278,0.9565)">同期リンクの追加</div><div class="t" style="left:1157.62px;top:488.69px;color:#222222;transform:scale(0.98,0.9565)">(A)...</div><div class="t" style="left:990.86px;top:525.41px;color:#222222;transform:scale(0.8807,0.9435)">ここに同期リンクを追加</div><div class="t" style="left:1208.76px;top:525.41px;color:#222222;transform:scale(0.9414,0.9435)">(D)</div><div class="t" style="left:992.71px;top:561.09px;color:#9b9b9b;transform:scale(0.8955,0.9565)">同期リンクを編集</div><div class="t" style="left:1155.09px;top:561.09px;color:#9b9b9b;transform:scale(0.9111,0.9565)">(E)...</div><div class="t" style="left:992.7px;top:597.09px;color:#9b9b9b;transform:scale(0.9,0.9565)">同期リンクを削除</div><div class="t" style="left:1154.53px;top:597.09px;color:#9b9b9b;transform:scale(0.8724,0.9565)">(R)</div><div class="t" style="left:993.11px;top:632.0px;color:#9b9b9b;transform:scale(0.8878,1.0)">すべての同期リンクを削除</div><div class="t" style="left:1234.25px;top:632.0px;color:#9b9b9b;transform:scale(1.0548,1.0)">(M)</div>
<!-- menu mnemonic underlines -->
<div class="a" style="left:1164px;top:510px;width:15px;height:1.4px;background:#1a1a1a"></div>
<div class="a" style="left:1216.5px;top:546px;width:15px;height:1.4px;background:#1a1a1a"></div>
<div class="a" style="left:1162px;top:582px;width:13px;height:1.4px;background:#9b9b9b"></div>
<div class="a" style="left:1162px;top:617.5px;width:14px;height:1.4px;background:#9b9b9b"></div>
<div class="a" style="left:1242px;top:654px;width:20px;height:1.4px;background:#9b9b9b"></div>
<!-- mouse cursor -->
<svg class="i" style="left:1250px;top:530px" width="50" height="60" viewBox="1250 530 50 60">
 <path d="M1260.5 536.5 V574.1 L1269.7 566.5 L1276 578.1 L1280.4 576.4 L1274.9 564.6 L1287.3 563.8 Z" fill="#fff" stroke="#0a0a14" stroke-width="1.4" stroke-linejoin="round"/>
</svg>

</div>
<div id="frame"></div>

</body></html>
